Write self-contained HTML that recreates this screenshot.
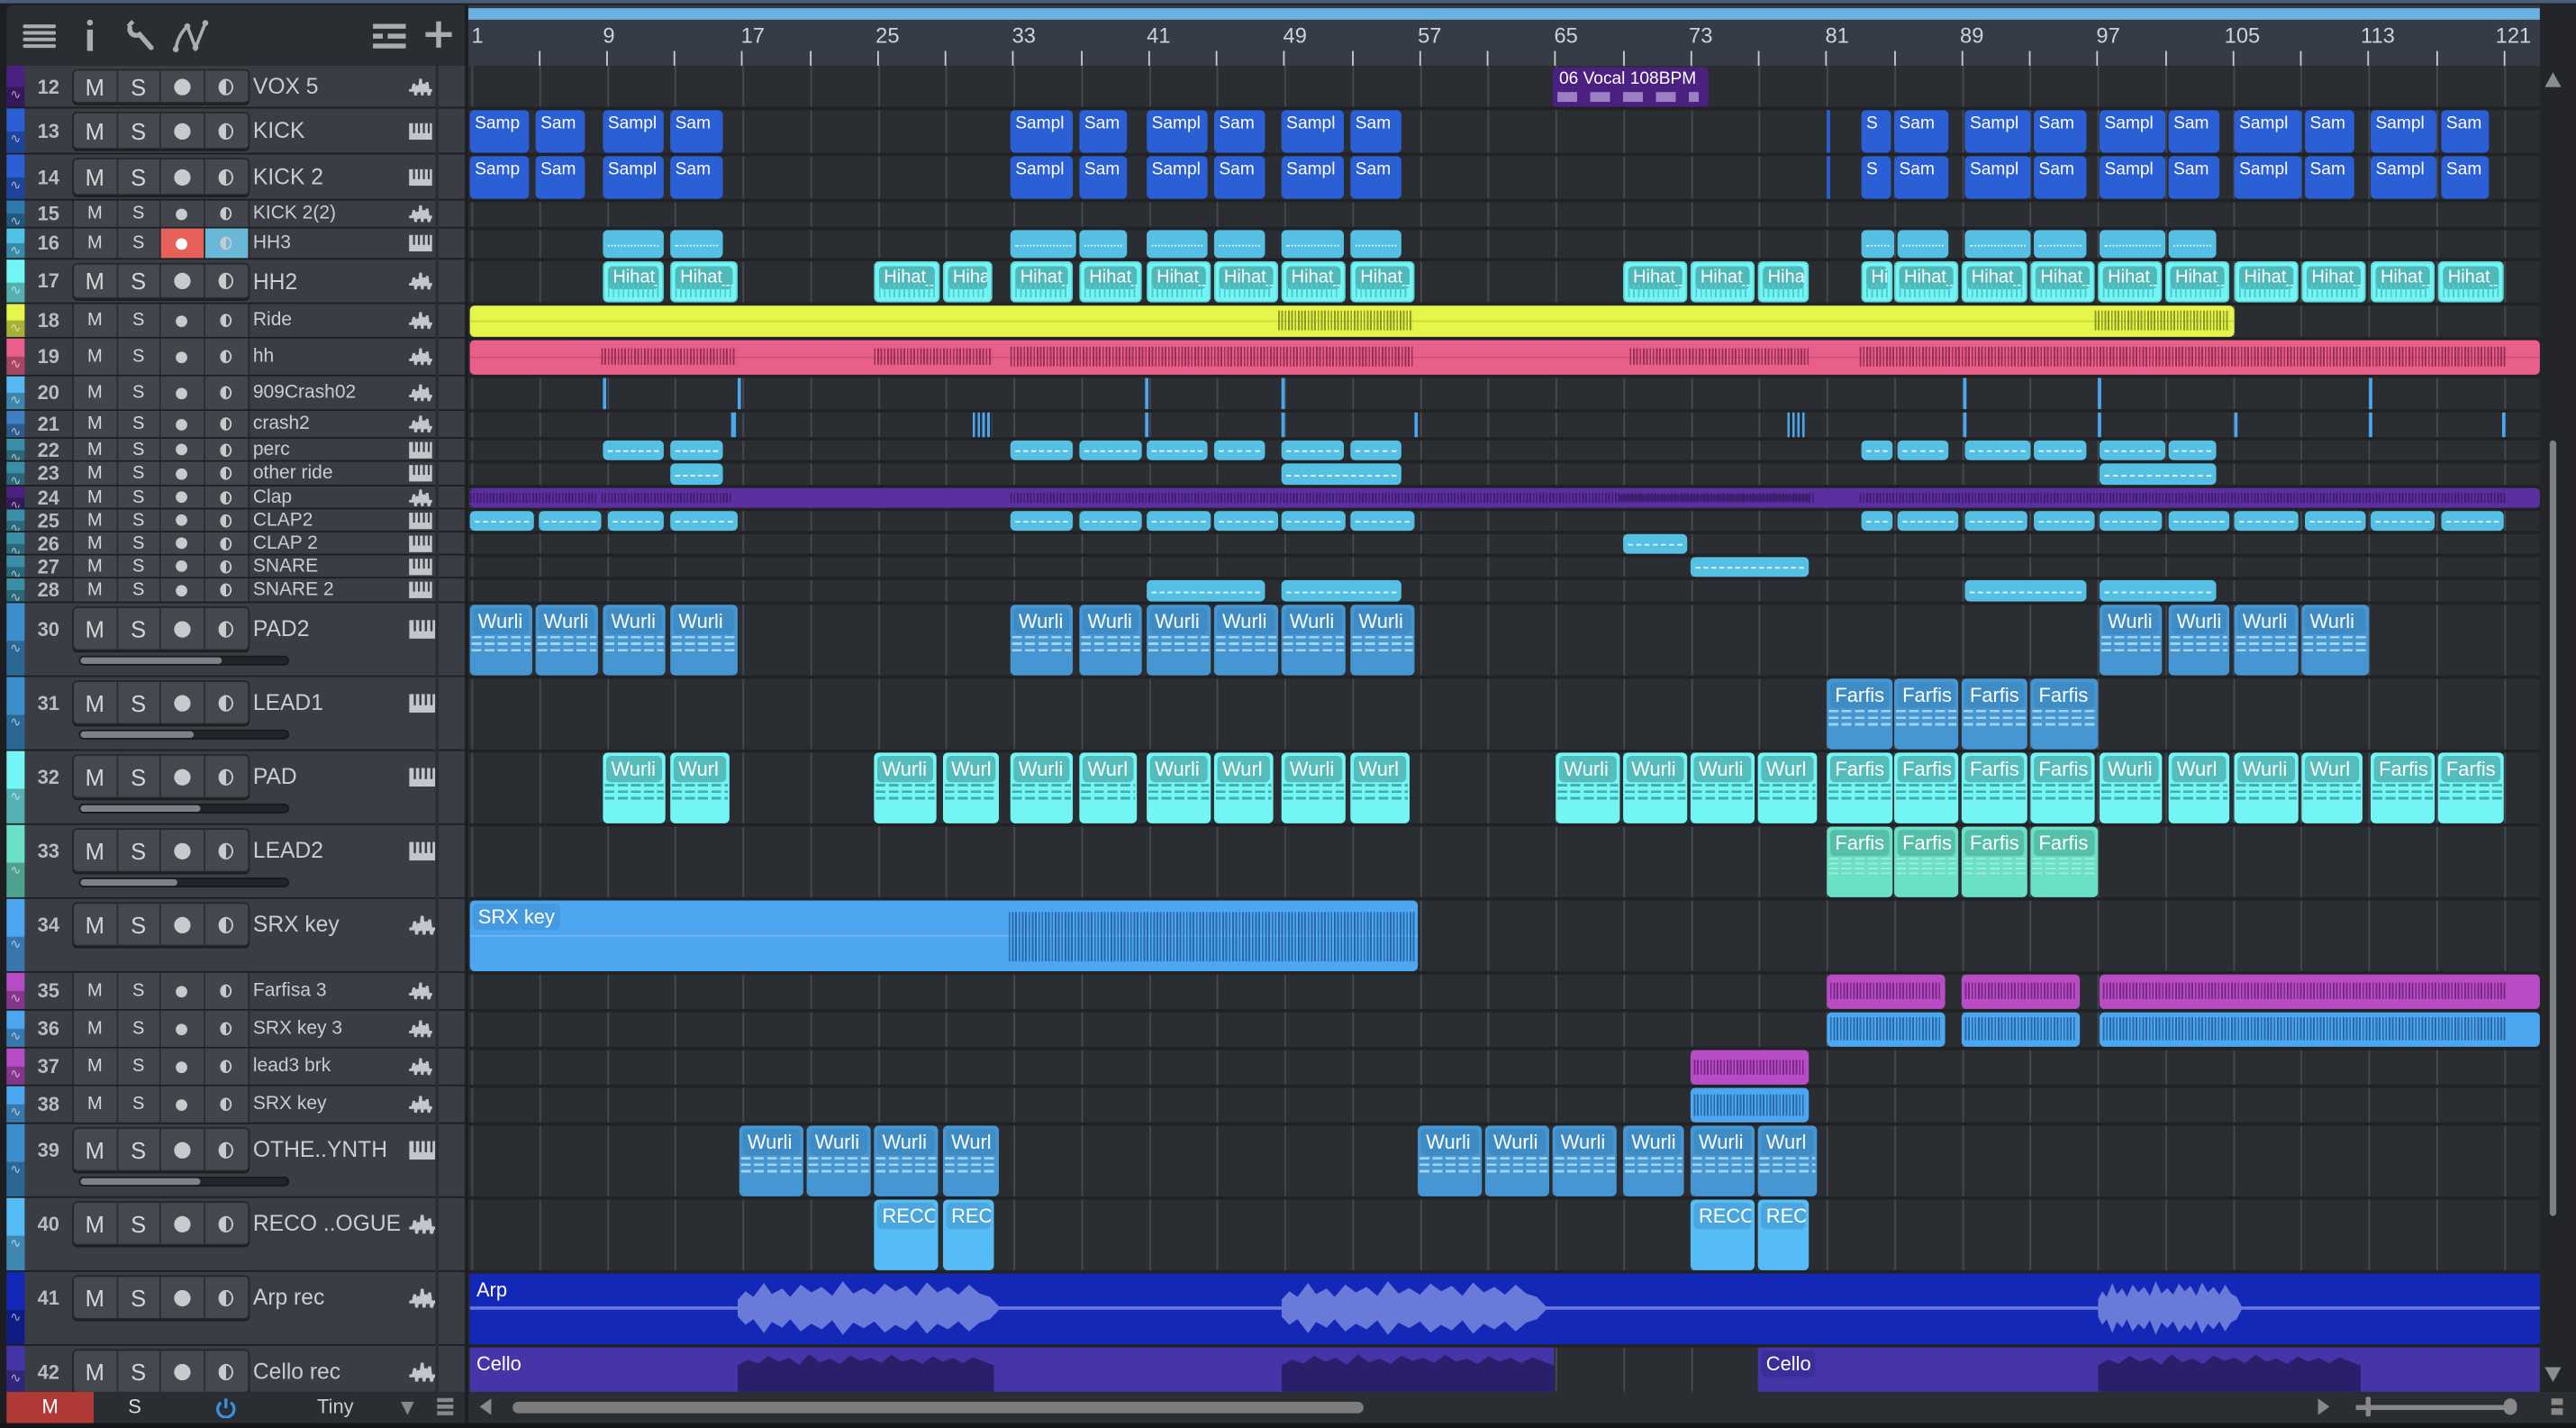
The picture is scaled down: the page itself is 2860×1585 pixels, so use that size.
<!DOCTYPE html>
<html><head><meta charset="utf-8"><style>
*{box-sizing:border-box}
body{margin:0;width:2860px;height:1584px;overflow:hidden;background:#1c1e21}
#s{position:absolute;left:0;top:0;width:1568px;height:869px;transform:scale(1.82398);transform-origin:0 0;font-family:"Liberation Sans",sans-serif;background:#1c1e21;overflow:hidden}
.abs{position:absolute}
#topl{position:absolute;left:4px;top:3px;width:279px;height:37px;background:#2a2d31;border-radius:4px 0 0 0}
#ru{position:absolute;left:285px;top:3px;width:1263px;height:37px;background:#363c47}
#ru .bl{position:absolute;left:0;top:2px;width:1262px;height:7px;background:#6ab0e0}
#ru .nm{position:absolute;top:11px;font-size:13px;color:#cfd2d6}
#ru .tk{position:absolute;top:28px;width:1px;height:9px;background:#c8cbd0}
#tl{position:absolute;left:285px;top:40px;width:1261px;height:807px;background-color:#2a2d31;background-image:repeating-linear-gradient(90deg,#464a50 0 1px,transparent 1px 41.24px);background-position:2px 0}
.sep{position:absolute;left:285px;width:1261px;height:2px;background:#202226}
.r{position:absolute;left:0;width:1546px}
.c{position:absolute;top:0;bottom:0;border-radius:3px;overflow:hidden;white-space:nowrap;color:#fff}
.k{background:#2a5fd6;font-size:10.5px;padding:2px 0 0 3px}
.h3{background:#56bfe4}
.h3:after{content:"";position:absolute;left:3px;right:3px;top:50%;border-top:1px dotted #e0f6ff}
.hh{background:#74f5f5;border:1px solid #5fd8d8}
.lb{display:block;margin:2px 2px 0 2px;border-radius:3px;padding:1px 3px;font-size:11px;overflow:hidden}
.hh .lb{background:#4fb8b8}
.hh:after{content:"";position:absolute;left:2px;right:2px;bottom:2px;height:8px;background:repeating-linear-gradient(90deg,#4fc9c9 0 1px,transparent 1px 3px)}
.w{background:#4596d2}
.w .lb{background:#3d8cc6;font-size:12px}
.w:after,.wc:after,.fm:after,.fb:after{content:"";position:absolute;left:1px;right:1px;top:19px;height:10px;background:repeating-linear-gradient(180deg,#b9e2f5 0 1.5px,transparent 1.5px 4px);opacity:.8;-webkit-mask:repeating-linear-gradient(90deg,#000 0 6px,transparent 6px 8px)}
.wc{background:#74f5f5}
.wc .lb{background:#55bcbc;font-size:12px}
.wc:after{background:repeating-linear-gradient(180deg,#3a9a9a 0 1.5px,transparent 1.5px 4px)}
.fb{background:#4596d2}.fb .lb{background:#3d8cc6;font-size:12px}
.fm{background:#6ae0c6}.fm .lb{background:#55bfaa;font-size:12px}
.fm:after{background:repeating-linear-gradient(180deg,#a8f0e0 0 1px,transparent 1px 3px)}
.sm{background:#56bfe4}
.sm:after{content:"";position:absolute;left:3px;right:3px;top:50%;border-top:1px dashed #dff4ff}
.wf{position:absolute;background:repeating-linear-gradient(90deg,var(--d) 0 1px,transparent 1px 2px)}
.hr{position:absolute;left:4px;width:279px;background:#3a3d43}
.st{position:absolute;left:0;top:0;width:11px;height:100%}
.st:after{content:"∿";position:absolute;left:0;bottom:0;width:11px;height:48%;background:rgba(0,0,0,.28);color:rgba(255,255,255,.6);font-size:8px;text-align:center;line-height:10px;overflow:hidden}
.ln{position:absolute;left:11px;top:0;height:100%;width:268px;display:flex;align-items:center}
.t .ln{height:31px}
.n{width:29px;text-align:center;font-weight:bold;font-size:12px;color:#b9bcc1}
.bx{display:flex;height:calc(100% - 4px);background:#45484e;border-radius:3px;border:1px solid #25272b;box-shadow:0 1px 0 #1c1d20}
.bx.f{height:100%;border-radius:0;border-width:0 1px;background:#42454b;box-shadow:none}
.b{width:26.5px;display:flex;align-items:center;justify-content:center;border-right:1px solid #2a2c30;color:#d4d6d9;font-size:14px}
.f .b{font-size:11px}
.b:last-child{border-right:0}
.dot{width:10px;height:10px;border-radius:50%;background:#c8cacd}
.f .dot{width:7px;height:7px}
.mo{width:9px;height:10px;border-radius:50%;border:1.5px solid #c8cacd;background:linear-gradient(90deg,#c8cacd 50%,transparent 50%)}
.f .mo{width:7px;height:8px}
.nme{margin-left:2px;width:94px;color:#c9ccd0;font-size:13.5px;white-space:nowrap;overflow:hidden}
.f~.nme{font-size:11.5px}
.ic{width:16px;height:12px}
.sl{position:absolute;left:44px;top:32px;width:128px;height:6px;background:#222429;border-radius:3px;border:1px solid #18191c}
.sl i{display:block;height:100%;background:#7d8288;border-radius:3px}
.aw{position:absolute;background:#6a7ad8;clip-path:polygon(0 35%,3% 20%,6% 30%,10% 5%,13% 25%,17% 15%,20% 30%,24% 8%,28% 22%,32% 12%,36% 28%,40% 2%,44% 24%,48% 14%,52% 26%,56% 6%,60% 20%,64% 10%,68% 28%,72% 4%,76% 22%,80% 12%,84% 26%,88% 8%,92% 24%,96% 30%,100% 50%,96% 70%,92% 76%,88% 92%,84% 74%,80% 88%,76% 78%,72% 96%,68% 72%,64% 90%,60% 80%,56% 94%,52% 74%,48% 86%,44% 76%,40% 98%,36% 72%,32% 88%,28% 78%,24% 92%,20% 70%,17% 85%,13% 75%,10% 95%,6% 70%,3% 80%,0 65%)}
.cw{position:absolute;background:#2a1f6a;clip-path:polygon(0 100%,0 30%,4% 15%,8% 25%,12% 5%,16% 20%,20% 10%,24% 28%,28% 0,32% 22%,36% 12%,40% 26%,44% 4%,48% 18%,52% 10%,56% 24%,60% 2%,64% 20%,68% 12%,72% 26%,76% 6%,80% 20%,84% 10%,88% 24%,92% 8%,96% 20%,100% 30%,100% 100%)}
</style></head><body><div id="s">
<svg width="0" height="0" style="position:absolute"><defs>
<symbol id="wv" viewBox="0 0 16 12"><path d="M1 8 L3 8 L4 4 L5 11 L6 5 L7 9 L8 1 L9 11 L10 4 L11 9 L12 3 L13 11 L14 8 L15 8" stroke="#c3c6ca" stroke-width="1.6" fill="none"/></symbol>
<symbol id="ky" viewBox="0 0 16 12"><rect x="1" y="1" width="14" height="10" fill="#c3c6ca"/><path d="M4 1V7M7 1V7M10 1V7M13 1V7" stroke="#3a3d43" stroke-width="1.2"/></symbol>
</defs></svg>

<div class="abs" style="left:0;top:0;width:1568px;height:2px;background:#4b5d78"></div>
<div id="topl">
<svg class="abs" style="left:10px;top:11px" width="20" height="16"><path d="M1 2H19M1 6H19M1 10H19M1 14H19" stroke="#a9acb0" stroke-width="2.2" stroke-linecap="round"/></svg>
<svg class="abs" style="left:47px;top:9px" width="8" height="20"><rect x="2" y="0" width="3.5" height="3.5" rx="1.5" fill="#a9acb0"/><rect x="2" y="6" width="3.5" height="13" fill="#a9acb0"/></svg>
<svg class="abs" style="left:72px;top:9px" width="20" height="20"><path d="M3 5 A4 4 0 0 0 9 9 L16 17" stroke="#a9acb0" stroke-width="3" fill="none" stroke-linecap="round"/><path d="M2 4 L5 1" stroke="#a9acb0" stroke-width="2.5"/></svg>
<svg class="abs" style="left:100px;top:9px" width="32" height="22"><path d="M3 18 Q4 10 10 4 M10 4 L15 17 L21 2" stroke="#a9acb0" stroke-width="2" fill="none"/><circle cx="3" cy="18" r="1.8" fill="#a9acb0"/><circle cx="10" cy="4" r="1.8" fill="#a9acb0"/><circle cx="15" cy="17" r="1.8" fill="#a9acb0"/><circle cx="21" cy="2" r="1.8" fill="#a9acb0"/></svg>
<svg class="abs" style="left:223px;top:11px" width="20" height="18"><path d="M0 2H20M0 8H6M9 8H20M0 14H20" stroke="#a9acb0" stroke-width="3"/></svg>
<svg class="abs" style="left:254px;top:9px" width="18" height="18"><path d="M9 1V17M1 9H17" stroke="#a9acb0" stroke-width="3"/></svg>
</div>

<div id="ru"><div class="bl"></div>
<span class="nm" style="left:2px">1</span><span class="nm" style="left:82px">9</span><span class="nm" style="left:166px">17</span><span class="nm" style="left:248px">25</span><span class="nm" style="left:331px">33</span><span class="nm" style="left:413px">41</span><span class="nm" style="left:496px">49</span><span class="nm" style="left:578px">57</span><span class="nm" style="left:661px">65</span><span class="nm" style="left:743px">73</span><span class="nm" style="left:826px">81</span><span class="nm" style="left:908px">89</span><span class="nm" style="left:991px">97</span><span class="nm" style="left:1069px">105</span><span class="nm" style="left:1152px">113</span><span class="nm" style="left:1234px">121</span>
<i class="tk" style="left:43px"></i><i class="tk" style="left:84px"></i><i class="tk" style="left:125px"></i><i class="tk" style="left:166px"></i><i class="tk" style="left:208px"></i><i class="tk" style="left:249px"></i><i class="tk" style="left:290px"></i><i class="tk" style="left:331px"></i><i class="tk" style="left:373px"></i><i class="tk" style="left:414px"></i><i class="tk" style="left:455px"></i><i class="tk" style="left:496px"></i><i class="tk" style="left:538px"></i><i class="tk" style="left:579px"></i><i class="tk" style="left:620px"></i><i class="tk" style="left:661px"></i><i class="tk" style="left:703px"></i><i class="tk" style="left:744px"></i><i class="tk" style="left:785px"></i><i class="tk" style="left:826px"></i><i class="tk" style="left:868px"></i><i class="tk" style="left:909px"></i><i class="tk" style="left:950px"></i><i class="tk" style="left:991px"></i><i class="tk" style="left:1033px"></i><i class="tk" style="left:1074px"></i><i class="tk" style="left:1115px"></i><i class="tk" style="left:1156px"></i><i class="tk" style="left:1198px"></i><i class="tk" style="left:1239px"></i>
</div>
<div class="abs" style="left:283px;top:3px;width:2px;height:866px;background:#1c1e21"></div>
<div class="abs" style="left:1546px;top:3px;width:22px;height:844px;background:#232528"></div>
<div class="abs" style="left:1549px;top:44px;width:0;height:0;border-left:5px solid transparent;border-right:5px solid transparent;border-bottom:9px solid #8a8d91"></div>
<div class="abs" style="left:1552px;top:268px;width:4px;height:472px;background:#7d8084;border-radius:2px"></div>
<div class="abs" style="left:1549px;top:832px;width:0;height:0;border-left:5px solid transparent;border-right:5px solid transparent;border-top:9px solid #8a8d91"></div>

<div id="tl"></div>
<div class="sep" style="top:65px"></div><div class="sep" style="top:93px"></div><div class="sep" style="top:121px"></div><div class="sep" style="top:138px"></div><div class="sep" style="top:157px"></div><div class="sep" style="top:184px"></div><div class="sep" style="top:205px"></div><div class="sep" style="top:228px"></div><div class="sep" style="top:249px"></div><div class="sep" style="top:266px"></div><div class="sep" style="top:280px"></div><div class="sep" style="top:295px"></div><div class="sep" style="top:309px"></div><div class="sep" style="top:323px"></div><div class="sep" style="top:337px"></div><div class="sep" style="top:351px"></div><div class="sep" style="top:366px"></div><div class="sep" style="top:411px"></div><div class="sep" style="top:456px"></div><div class="sep" style="top:501px"></div><div class="sep" style="top:546px"></div><div class="sep" style="top:591px"></div><div class="sep" style="top:614px"></div><div class="sep" style="top:637px"></div><div class="sep" style="top:660px"></div><div class="sep" style="top:683px"></div><div class="sep" style="top:728px"></div><div class="sep" style="top:773px"></div><div class="sep" style="top:818px"></div>

<div class="r" style="top:41px;height:24px"><div class="c" style="left:945px;width:95px;background:#4a2080;font-size:10.5px;padding:1px 4px">06 Vocal 108BPM<div class="abs" style="left:3px;bottom:3px;width:86px;height:6px;background:repeating-linear-gradient(90deg,#9a80c0 0 12px,transparent 12px 20px)"></div></div></div>

<div class="r" style="top:67px;height:26px">
<div class="c k" style="left:286px;width:36px">Samp</div><div class="c k" style="left:326px;width:30px">Sam</div><div class="c k" style="left:367px;width:37px">Sampl</div><div class="c k" style="left:408px;width:32px">Sam</div><div class="c k" style="left:615px;width:38px">Sampl</div><div class="c k" style="left:657px;width:29px">Sam</div><div class="c k" style="left:698px;width:37px">Sampl</div><div class="c k" style="left:739px;width:31px">Sam</div><div class="c k" style="left:780px;width:38px">Sampl</div><div class="c k" style="left:822px;width:31px">Sam</div><div class="abs" style="left:1112px;top:0;width:2px;height:26px;background:#2a5fd6"></div><div class="c k" style="left:1133px;width:18px">S</div><div class="c k" style="left:1153px;width:33px">Sam</div><div class="c k" style="left:1196px;width:40px">Sampl</div><div class="c k" style="left:1238px;width:32px">Sam</div><div class="c k" style="left:1278px;width:40px">Sampl</div><div class="c k" style="left:1320px;width:31px">Sam</div><div class="c k" style="left:1360px;width:41px">Sampl</div><div class="c k" style="left:1403px;width:30px">Sam</div><div class="c k" style="left:1443px;width:40px">Sampl</div><div class="c k" style="left:1486px;width:29px">Sam</div></div>
<div class="r" style="top:95px;height:26px">
<div class="c k" style="left:286px;width:36px">Samp</div><div class="c k" style="left:326px;width:30px">Sam</div><div class="c k" style="left:367px;width:37px">Sampl</div><div class="c k" style="left:408px;width:32px">Sam</div><div class="c k" style="left:615px;width:38px">Sampl</div><div class="c k" style="left:657px;width:29px">Sam</div><div class="c k" style="left:698px;width:37px">Sampl</div><div class="c k" style="left:739px;width:31px">Sam</div><div class="c k" style="left:780px;width:38px">Sampl</div><div class="c k" style="left:822px;width:31px">Sam</div><div class="abs" style="left:1112px;top:0;width:2px;height:26px;background:#2a5fd6"></div><div class="c k" style="left:1133px;width:18px">S</div><div class="c k" style="left:1153px;width:33px">Sam</div><div class="c k" style="left:1196px;width:40px">Sampl</div><div class="c k" style="left:1238px;width:32px">Sam</div><div class="c k" style="left:1278px;width:40px">Sampl</div><div class="c k" style="left:1320px;width:31px">Sam</div><div class="c k" style="left:1360px;width:41px">Sampl</div><div class="c k" style="left:1403px;width:30px">Sam</div><div class="c k" style="left:1443px;width:40px">Sampl</div><div class="c k" style="left:1486px;width:29px">Sam</div></div>

<div class="r" style="top:140px;height:17px">
<div class="c h3" style="left:367px;width:37px"></div><div class="c h3" style="left:408px;width:32px"></div><div class="c h3" style="left:615px;width:40px"></div><div class="c h3" style="left:657px;width:29px"></div><div class="c h3" style="left:698px;width:37px"></div><div class="c h3" style="left:739px;width:31px"></div><div class="c h3" style="left:780px;width:38px"></div><div class="c h3" style="left:822px;width:31px"></div><div class="c h3" style="left:1133px;width:20px"></div><div class="c h3" style="left:1155px;width:31px"></div><div class="c h3" style="left:1196px;width:40px"></div><div class="c h3" style="left:1238px;width:32px"></div><div class="c h3" style="left:1278px;width:40px"></div><div class="c h3" style="left:1320px;width:29px"></div></div>

<div class="r" style="top:159px;height:25px">
<div class="c hh" style="left:367px;width:37px"><span class="lb">Hihat_</span></div><div class="c hh" style="left:408px;width:41px"><span class="lb">Hihat_l</span></div><div class="c hh" style="left:532px;width:40px"><span class="lb">Hihat_</span></div><div class="c hh" style="left:574px;width:30px"><span class="lb">Hiha</span></div><div class="c hh" style="left:615px;width:38px"><span class="lb">Hihat_</span></div><div class="c hh" style="left:657px;width:38px"><span class="lb">Hihat_</span></div><div class="c hh" style="left:698px;width:39px"><span class="lb">Hihat_</span></div><div class="c hh" style="left:739px;width:39px"><span class="lb">Hihat_</span></div><div class="c hh" style="left:780px;width:39px"><span class="lb">Hihat_</span></div><div class="c hh" style="left:822px;width:39px"><span class="lb">Hihat_</span></div><div class="c hh" style="left:988px;width:39px"><span class="lb">Hihat_</span></div><div class="c hh" style="left:1029px;width:39px"><span class="lb">Hihat_</span></div><div class="c hh" style="left:1070px;width:31px"><span class="lb">Hiha</span></div><div class="c hh" style="left:1133px;width:19px"><span class="lb">Hi</span></div><div class="c hh" style="left:1153px;width:39px"><span class="lb">Hihat_</span></div><div class="c hh" style="left:1194px;width:40px"><span class="lb">Hihat_</span></div><div class="c hh" style="left:1236px;width:39px"><span class="lb">Hihat_</span></div><div class="c hh" style="left:1277px;width:39px"><span class="lb">Hihat_</span></div><div class="c hh" style="left:1318px;width:39px"><span class="lb">Hihat_</span></div><div class="c hh" style="left:1360px;width:39px"><span class="lb">Hihat_</span></div><div class="c hh" style="left:1401px;width:39px"><span class="lb">Hihat_</span></div><div class="c hh" style="left:1443px;width:39px"><span class="lb">Hihat_</span></div><div class="c hh" style="left:1484px;width:40px"><span class="lb">Hihat_</span></div></div>

<div class="r" style="top:186px;height:19px"><div class="c" style="left:286px;width:1074px;background:#e6f54a"><div class="abs" style="left:0;right:0;top:9px;height:1px;background:#cbd83e"></div><div class="wf" style="--d:#8e9a28;left:492px;width:82px;top:3px;height:12px"></div><div class="wf" style="--d:#8e9a28;left:989px;width:82px;top:3px;height:12px"></div></div></div>
<div class="r" style="top:207px;height:21px"><div class="c" style="left:286px;width:1260px;background:#e8608a"><div class="abs" style="left:0;right:0;top:10px;height:1px;background:#d0507a"></div><div class="wf" style="--d:#9a3058;left:80px;width:82px;top:5px;height:10px"></div><div class="wf" style="--d:#9a3058;left:246px;width:72px;top:5px;height:10px"></div><div class="wf" style="--d:#9a3058;left:329px;width:246px;top:4px;height:12px"></div><div class="wf" style="--d:#9a3058;left:706px;width:110px;top:5px;height:10px"></div><div class="wf" style="--d:#9a3058;left:846px;width:393px;top:4px;height:12px"></div></div></div>

<div class="r" style="top:230px;height:19px"><i class="abs" style="left:367px;top:0;width:2px;height:19px;background:#4aa8f0"></i><i class="abs" style="left:449px;top:0;width:2px;height:19px;background:#4aa8f0"></i><i class="abs" style="left:697px;top:0;width:2px;height:19px;background:#4aa8f0"></i><i class="abs" style="left:780px;top:0;width:2px;height:19px;background:#4aa8f0"></i><i class="abs" style="left:1195px;top:0;width:2px;height:19px;background:#4aa8f0"></i><i class="abs" style="left:1277px;top:0;width:2px;height:19px;background:#4aa8f0"></i><i class="abs" style="left:1442px;top:0;width:2px;height:19px;background:#4aa8f0"></i></div>
<div class="r" style="top:251px;height:15px"><i class="abs" style="left:445px;top:0;width:3px;height:15px;background:#4aa8f0"></i><i class="abs" style="left:592px;top:0;width:12px;height:15px;background:repeating-linear-gradient(90deg,#4aa8f0 0 1.5px,transparent 1.5px 3px)"></i><i class="abs" style="left:697px;top:0;width:2px;height:15px;background:#4aa8f0"></i><i class="abs" style="left:780px;top:0;width:2px;height:15px;background:#4aa8f0"></i><i class="abs" style="left:861px;top:0;width:2px;height:15px;background:#4aa8f0"></i><i class="abs" style="left:1088px;top:0;width:12px;height:15px;background:repeating-linear-gradient(90deg,#4aa8f0 0 1.5px,transparent 1.5px 3px)"></i><i class="abs" style="left:1195px;top:0;width:2px;height:15px;background:#4aa8f0"></i><i class="abs" style="left:1277px;top:0;width:2px;height:15px;background:#4aa8f0"></i><i class="abs" style="left:1360px;top:0;width:2px;height:15px;background:#4aa8f0"></i><i class="abs" style="left:1442px;top:0;width:2px;height:15px;background:#4aa8f0"></i><i class="abs" style="left:1523px;top:0;width:2px;height:15px;background:#4aa8f0"></i></div>

<div class="r" style="top:268px;height:12px">
<div class="c sm" style="left:367px;width:37px"></div><div class="c sm" style="left:408px;width:32px"></div><div class="c sm" style="left:615px;width:38px"></div><div class="c sm" style="left:657px;width:38px"></div><div class="c sm" style="left:698px;width:37px"></div><div class="c sm" style="left:739px;width:31px"></div><div class="c sm" style="left:780px;width:38px"></div><div class="c sm" style="left:822px;width:31px"></div><div class="c sm" style="left:1133px;width:19px"></div><div class="c sm" style="left:1155px;width:31px"></div><div class="c sm" style="left:1196px;width:40px"></div><div class="c sm" style="left:1238px;width:32px"></div><div class="c sm" style="left:1278px;width:40px"></div><div class="c sm" style="left:1320px;width:29px"></div></div>
<div class="r" style="top:282px;height:13px"><div class="c sm" style="left:408px;width:32px"></div><div class="c sm" style="left:780px;width:73px"></div><div class="c sm" style="left:1278px;width:71px"></div></div>
<div class="r" style="top:297px;height:12px"><div class="c" style="left:286px;width:1260px;background:#5c2fa0"><div class="wf" style="--d:#3e1e70;left:0;width:78px;top:3px;height:6px"></div><div class="wf" style="--d:#3e1e70;left:80px;width:80px;top:3px;height:6px"></div><div class="wf" style="--d:#3e1e70;left:329px;width:490px;top:3px;height:6px"></div><div class="wf" style="--d:#3e1e70;left:700px;width:115px;top:4px;height:4px"></div><div class="wf" style="--d:#3e1e70;left:846px;width:393px;top:3px;height:6px"></div></div></div>
<div class="r" style="top:311px;height:12px">
<div class="c sm" style="left:286px;width:39px"></div><div class="c sm" style="left:328px;width:38px"></div><div class="c sm" style="left:370px;width:34px"></div><div class="c sm" style="left:408px;width:41px"></div><div class="c sm" style="left:615px;width:38px"></div><div class="c sm" style="left:657px;width:38px"></div><div class="c sm" style="left:698px;width:39px"></div><div class="c sm" style="left:739px;width:39px"></div><div class="c sm" style="left:780px;width:39px"></div><div class="c sm" style="left:822px;width:39px"></div><div class="c sm" style="left:1133px;width:19px"></div><div class="c sm" style="left:1155px;width:37px"></div><div class="c sm" style="left:1196px;width:38px"></div><div class="c sm" style="left:1238px;width:37px"></div><div class="c sm" style="left:1278px;width:38px"></div><div class="c sm" style="left:1320px;width:37px"></div><div class="c sm" style="left:1360px;width:39px"></div><div class="c sm" style="left:1403px;width:37px"></div><div class="c sm" style="left:1443px;width:39px"></div><div class="c sm" style="left:1486px;width:38px"></div></div>
<div class="r" style="top:325px;height:12px"><div class="c sm" style="left:988px;width:39px"></div></div>
<div class="r" style="top:339px;height:12px"><div class="c sm" style="left:1029px;width:72px"></div></div>
<div class="r" style="top:353px;height:13px"><div class="c sm" style="left:698px;width:72px"></div><div class="c sm" style="left:780px;width:73px"></div><div class="c sm" style="left:1196px;width:74px"></div><div class="c sm" style="left:1278px;width:71px"></div></div>

<div class="r" style="top:368px;height:43px">
<div class="c w" style="left:286px;width:38px"><span class="lb">Wurli</span></div><div class="c w" style="left:326px;width:38px"><span class="lb">Wurli</span></div><div class="c w" style="left:367px;width:38px"><span class="lb">Wurli</span></div><div class="c w" style="left:408px;width:41px"><span class="lb">Wurli</span></div><div class="c w" style="left:615px;width:38px"><span class="lb">Wurli</span></div><div class="c w" style="left:657px;width:38px"><span class="lb">Wurli</span></div><div class="c w" style="left:698px;width:39px"><span class="lb">Wurli</span></div><div class="c w" style="left:739px;width:39px"><span class="lb">Wurli</span></div><div class="c w" style="left:780px;width:39px"><span class="lb">Wurli</span></div><div class="c w" style="left:822px;width:39px"><span class="lb">Wurli</span></div><div class="c w" style="left:1278px;width:38px"><span class="lb">Wurli</span></div><div class="c w" style="left:1320px;width:37px"><span class="lb">Wurli</span></div><div class="c w" style="left:1360px;width:39px"><span class="lb">Wurli</span></div><div class="c w" style="left:1401px;width:41px"><span class="lb">Wurli</span></div></div>
<div class="r" style="top:413px;height:43px"><div class="c fb" style="left:1112px;width:40px"><span class="lb">Farfis</span></div><div class="c fb" style="left:1153px;width:39px"><span class="lb">Farfis</span></div><div class="c fb" style="left:1194px;width:40px"><span class="lb">Farfis</span></div><div class="c fb" style="left:1236px;width:41px"><span class="lb">Farfis</span></div></div>
<div class="r" style="top:458px;height:43px">
<div class="c wc" style="left:367px;width:38px"><span class="lb">Wurli</span></div><div class="c wc" style="left:408px;width:36px"><span class="lb">Wurl</span></div><div class="c wc" style="left:532px;width:38px"><span class="lb">Wurli</span></div><div class="c wc" style="left:574px;width:34px"><span class="lb">Wurl</span></div><div class="c wc" style="left:615px;width:38px"><span class="lb">Wurli</span></div><div class="c wc" style="left:657px;width:35px"><span class="lb">Wurl</span></div><div class="c wc" style="left:698px;width:39px"><span class="lb">Wurli</span></div><div class="c wc" style="left:739px;width:36px"><span class="lb">Wurl</span></div><div class="c wc" style="left:780px;width:39px"><span class="lb">Wurli</span></div><div class="c wc" style="left:822px;width:36px"><span class="lb">Wurl</span></div><div class="c wc" style="left:947px;width:39px"><span class="lb">Wurli</span></div><div class="c wc" style="left:988px;width:39px"><span class="lb">Wurli</span></div><div class="c wc" style="left:1029px;width:39px"><span class="lb">Wurli</span></div><div class="c wc" style="left:1070px;width:36px"><span class="lb">Wurl</span></div><div class="c wc" style="left:1112px;width:40px"><span class="lb">Farfis</span></div><div class="c wc" style="left:1153px;width:39px"><span class="lb">Farfis</span></div><div class="c wc" style="left:1194px;width:40px"><span class="lb">Farfis</span></div><div class="c wc" style="left:1236px;width:39px"><span class="lb">Farfis</span></div><div class="c wc" style="left:1278px;width:38px"><span class="lb">Wurli</span></div><div class="c wc" style="left:1320px;width:37px"><span class="lb">Wurl</span></div><div class="c wc" style="left:1360px;width:39px"><span class="lb">Wurli</span></div><div class="c wc" style="left:1401px;width:37px"><span class="lb">Wurl</span></div><div class="c wc" style="left:1443px;width:39px"><span class="lb">Farfis</span></div><div class="c wc" style="left:1484px;width:40px"><span class="lb">Farfis</span></div></div>
<div class="r" style="top:503px;height:43px"><div class="c fm" style="left:1112px;width:40px"><span class="lb">Farfis</span></div><div class="c fm" style="left:1153px;width:39px"><span class="lb">Farfis</span></div><div class="c fm" style="left:1194px;width:40px"><span class="lb">Farfis</span></div><div class="c fm" style="left:1236px;width:41px"><span class="lb">Farfis</span></div></div>
<div class="r" style="top:548px;height:43px"><div class="c" style="left:286px;width:577px;background:#4da6f0"><span class="lb" style="display:inline-block;background:#4499e0;font-size:12px">SRX key</span><div class="abs" style="left:0;right:0;top:21px;height:1px;background:#6fb8f5"></div><div class="wf" style="--d:#2a6aa8;left:328px;width:248px;top:7px;height:30px"></div></div></div>
<div class="r" style="top:593px;height:21px"><div class="c" style="left:1112px;width:72px;background:#b84cc4"><div class="wf" style="--d:#7a2888;left:2px;right:2px;top:5px;height:10px"></div></div><div class="c" style="left:1194px;width:72px;background:#b84cc4"><div class="wf" style="--d:#7a2888;left:2px;right:2px;top:5px;height:10px"></div></div><div class="c" style="left:1278px;width:268px;background:#b84cc4"><div class="wf" style="--d:#7a2888;left:2px;width:245px;top:5px;height:10px"></div></div></div>
<div class="r" style="top:616px;height:21px"><div class="c" style="left:1112px;width:72px;background:#4da6f0"><div class="wf" style="--d:#2a6aa8;left:2px;right:2px;top:3px;height:14px"></div></div><div class="c" style="left:1194px;width:72px;background:#4da6f0"><div class="wf" style="--d:#2a6aa8;left:2px;right:2px;top:3px;height:14px"></div></div><div class="c" style="left:1278px;width:268px;background:#4da6f0"><div class="wf" style="--d:#2a6aa8;left:2px;width:245px;top:3px;height:14px"></div></div></div>
<div class="r" style="top:639px;height:21px"><div class="c" style="left:1029px;width:72px;background:#b84cc4"><div class="wf" style="--d:#7a2888;left:2px;right:2px;top:6px;height:9px"></div></div></div>
<div class="r" style="top:662px;height:21px"><div class="c" style="left:1029px;width:72px;background:#4da6f0"><div class="wf" style="--d:#2a6aa8;left:2px;right:2px;top:4px;height:13px"></div></div></div>
<div class="r" style="top:685px;height:43px">
<div class="c w" style="left:450px;width:39px"><span class="lb">Wurli</span></div><div class="c w" style="left:491px;width:39px"><span class="lb">Wurli</span></div><div class="c w" style="left:532px;width:39px"><span class="lb">Wurli</span></div><div class="c w" style="left:574px;width:34px"><span class="lb">Wurl</span></div><div class="c w" style="left:863px;width:39px"><span class="lb">Wurli</span></div><div class="c w" style="left:904px;width:39px"><span class="lb">Wurli</span></div><div class="c w" style="left:945px;width:39px"><span class="lb">Wurli</span></div><div class="c w" style="left:988px;width:37px"><span class="lb">Wurli</span></div><div class="c w" style="left:1029px;width:39px"><span class="lb">Wurli</span></div><div class="c w" style="left:1070px;width:36px"><span class="lb">Wurl</span></div></div>
<div class="r" style="top:730px;height:43px"><div class="c" style="left:532px;width:39px;background:#55bcf5"><span class="lb" style="background:#4aa6dc;font-size:12px">RECO</span></div><div class="c" style="left:574px;width:31px;background:#55bcf5"><span class="lb" style="background:#4aa6dc;font-size:12px">REC</span></div><div class="c" style="left:1029px;width:39px;background:#55bcf5"><span class="lb" style="background:#4aa6dc;font-size:12px">RECO</span></div><div class="c" style="left:1070px;width:31px;background:#55bcf5"><span class="lb" style="background:#4aa6dc;font-size:12px">REC</span></div></div>
<div class="r" style="top:775px;height:43px"><div class="c" style="left:286px;width:1260px;background:#1428b8;border-radius:0"><span class="abs" style="left:4px;top:3px;font-size:12px">Arp</span><div class="abs" style="left:0;right:0;top:20px;height:1.5px;background:#6a7ad8"></div><div class="aw" style="left:163px;width:160px;top:4px;height:34px"></div><div class="aw" style="left:494px;width:162px;top:4px;height:34px"></div><div class="aw" style="left:991px;width:88px;top:4px;height:34px"></div></div></div>
<div class="r" style="top:820px;height:27px"><div class="c" style="left:286px;width:660px;background:#4535a8;border-radius:0"><span class="abs" style="left:4px;top:3px;font-size:12px">Cello</span><div class="cw" style="left:163px;width:156px;top:4px;height:23px"></div><div class="cw" style="left:494px;width:166px;top:4px;height:23px"></div></div><div class="c" style="left:1070px;width:476px;background:#4535a8;border-radius:0"><span class="abs" style="left:2px;top:2px;font-size:12px;background:#3b2d9a;padding:1px 3px;border-radius:3px">Cello</span><div class="cw" style="left:207px;width:160px;top:4px;height:23px"></div></div></div>

<div class="hr" style="top:40px;height:25px"><div class="st" style="background:#4a2080"></div><div class="ln"><span class="n">12</span><div class="bx"><span class="b">M</span><span class="b">S</span><span class="b"><i class="dot"></i></span><span class="b"><i class="mo"></i></span></div><span class="nme">VOX 5</span><svg class="ic"><use href="#wv"/></svg></div></div>
<div class="hr" style="top:66px;height:27px"><div class="st" style="background:#2a5fd6"></div><div class="ln"><span class="n">13</span><div class="bx"><span class="b">M</span><span class="b">S</span><span class="b"><i class="dot"></i></span><span class="b"><i class="mo"></i></span></div><span class="nme">KICK</span><svg class="ic"><use href="#ky"/></svg></div></div>
<div class="hr" style="top:94px;height:27px"><div class="st" style="background:#2a5fd6"></div><div class="ln"><span class="n">14</span><div class="bx"><span class="b">M</span><span class="b">S</span><span class="b"><i class="dot"></i></span><span class="b"><i class="mo"></i></span></div><span class="nme">KICK 2</span><svg class="ic"><use href="#ky"/></svg></div></div>
<div class="hr" style="top:122px;height:16px"><div class="st" style="background:#2e7ab0"></div><div class="ln"><span class="n">15</span><div class="bx f"><span class="b">M</span><span class="b">S</span><span class="b"><i class="dot"></i></span><span class="b"><i class="mo"></i></span></div><span class="nme">KICK 2(2)</span><svg class="ic"><use href="#wv"/></svg></div></div>
<div class="hr" style="top:139px;height:18px"><div class="st" style="background:#4fc0e6"></div><div class="ln"><span class="n">16</span><div class="bx f"><span class="b">M</span><span class="b">S</span><span class="b" style="background:#e8605a"><i class="dot" style="background:#fff"></i></span><span class="b" style="background:#6ab8d8"><i class="mo"></i></span></div><span class="nme">HH3</span><svg class="ic"><use href="#ky"/></svg></div></div>
<div class="hr" style="top:158px;height:26px"><div class="st" style="background:#74f5f5"></div><div class="ln"><span class="n">17</span><div class="bx"><span class="b">M</span><span class="b">S</span><span class="b"><i class="dot"></i></span><span class="b"><i class="mo"></i></span></div><span class="nme">HH2</span><svg class="ic"><use href="#wv"/></svg></div></div>
<div class="hr" style="top:185px;height:20px"><div class="st" style="background:#e6f54a"></div><div class="ln"><span class="n">18</span><div class="bx f"><span class="b">M</span><span class="b">S</span><span class="b"><i class="dot"></i></span><span class="b"><i class="mo"></i></span></div><span class="nme">Ride</span><svg class="ic"><use href="#wv"/></svg></div></div>
<div class="hr" style="top:206px;height:22px"><div class="st" style="background:#e8608a"></div><div class="ln"><span class="n">19</span><div class="bx f"><span class="b">M</span><span class="b">S</span><span class="b"><i class="dot"></i></span><span class="b"><i class="mo"></i></span></div><span class="nme">hh</span><svg class="ic"><use href="#wv"/></svg></div></div>
<div class="hr" style="top:229px;height:20px"><div class="st" style="background:#56b8f0"></div><div class="ln"><span class="n">20</span><div class="bx f"><span class="b">M</span><span class="b">S</span><span class="b"><i class="dot"></i></span><span class="b"><i class="mo"></i></span></div><span class="nme">909Crash02</span><svg class="ic"><use href="#wv"/></svg></div></div>
<div class="hr" style="top:250px;height:16px"><div class="st" style="background:#3e7ec2"></div><div class="ln"><span class="n">21</span><div class="bx f"><span class="b">M</span><span class="b">S</span><span class="b"><i class="dot"></i></span><span class="b"><i class="mo"></i></span></div><span class="nme">crash2</span><svg class="ic"><use href="#wv"/></svg></div></div>
<div class="hr" style="top:267px;height:13px"><div class="st" style="background:#3a8fa8"></div><div class="ln"><span class="n">22</span><div class="bx f"><span class="b">M</span><span class="b">S</span><span class="b"><i class="dot"></i></span><span class="b"><i class="mo"></i></span></div><span class="nme">perc</span><svg class="ic"><use href="#ky"/></svg></div></div>
<div class="hr" style="top:281px;height:14px"><div class="st" style="background:#3a8fa8"></div><div class="ln"><span class="n">23</span><div class="bx f"><span class="b">M</span><span class="b">S</span><span class="b"><i class="dot"></i></span><span class="b"><i class="mo"></i></span></div><span class="nme">other ride</span><svg class="ic"><use href="#ky"/></svg></div></div>
<div class="hr" style="top:296px;height:13px"><div class="st" style="background:#4a2080"></div><div class="ln"><span class="n">24</span><div class="bx f"><span class="b">M</span><span class="b">S</span><span class="b"><i class="dot"></i></span><span class="b"><i class="mo"></i></span></div><span class="nme">Clap</span><svg class="ic"><use href="#wv"/></svg></div></div>
<div class="hr" style="top:310px;height:13px"><div class="st" style="background:#3a8fa8"></div><div class="ln"><span class="n">25</span><div class="bx f"><span class="b">M</span><span class="b">S</span><span class="b"><i class="dot"></i></span><span class="b"><i class="mo"></i></span></div><span class="nme">CLAP2</span><svg class="ic"><use href="#ky"/></svg></div></div>
<div class="hr" style="top:324px;height:13px"><div class="st" style="background:#3a8fa8"></div><div class="ln"><span class="n">26</span><div class="bx f"><span class="b">M</span><span class="b">S</span><span class="b"><i class="dot"></i></span><span class="b"><i class="mo"></i></span></div><span class="nme">CLAP 2</span><svg class="ic"><use href="#ky"/></svg></div></div>
<div class="hr" style="top:338px;height:13px"><div class="st" style="background:#3a8fa8"></div><div class="ln"><span class="n">27</span><div class="bx f"><span class="b">M</span><span class="b">S</span><span class="b"><i class="dot"></i></span><span class="b"><i class="mo"></i></span></div><span class="nme">SNARE</span><svg class="ic"><use href="#ky"/></svg></div></div>
<div class="hr" style="top:352px;height:14px"><div class="st" style="background:#3a8fa8"></div><div class="ln"><span class="n">28</span><div class="bx f"><span class="b">M</span><span class="b">S</span><span class="b"><i class="dot"></i></span><span class="b"><i class="mo"></i></span></div><span class="nme">SNARE 2</span><svg class="ic"><use href="#ky"/></svg></div></div>
<div class="hr t" style="top:367px;height:44px"><div class="st" style="background:#3c8fcc"></div><div class="ln"><span class="n">30</span><div class="bx"><span class="b">M</span><span class="b">S</span><span class="b"><i class="dot"></i></span><span class="b"><i class="mo"></i></span></div><span class="nme">PAD2</span><svg class="ic" style="width:18px;height:14px"><use href="#ky"/></svg></div><div class="sl"><i style="width:68%"></i></div></div>
<div class="hr t" style="top:412px;height:44px"><div class="st" style="background:#3c8fcc"></div><div class="ln"><span class="n">31</span><div class="bx"><span class="b">M</span><span class="b">S</span><span class="b"><i class="dot"></i></span><span class="b"><i class="mo"></i></span></div><span class="nme">LEAD1</span><svg class="ic" style="width:18px;height:14px"><use href="#ky"/></svg></div><div class="sl"><i style="width:55%"></i></div></div>
<div class="hr t" style="top:457px;height:44px"><div class="st" style="background:#74f5f5"></div><div class="ln"><span class="n">32</span><div class="bx"><span class="b">M</span><span class="b">S</span><span class="b"><i class="dot"></i></span><span class="b"><i class="mo"></i></span></div><span class="nme">PAD</span><svg class="ic" style="width:18px;height:14px"><use href="#ky"/></svg></div><div class="sl"><i style="width:58%"></i></div></div>
<div class="hr t" style="top:502px;height:44px"><div class="st" style="background:#6ae0c6"></div><div class="ln"><span class="n">33</span><div class="bx"><span class="b">M</span><span class="b">S</span><span class="b"><i class="dot"></i></span><span class="b"><i class="mo"></i></span></div><span class="nme">LEAD2</span><svg class="ic" style="width:18px;height:14px"><use href="#ky"/></svg></div><div class="sl"><i style="width:47%"></i></div></div>
<div class="hr t" style="top:547px;height:44px"><div class="st" style="background:#4da6f0"></div><div class="ln"><span class="n">34</span><div class="bx"><span class="b">M</span><span class="b">S</span><span class="b"><i class="dot"></i></span><span class="b"><i class="mo"></i></span></div><span class="nme">SRX key</span><svg class="ic" style="width:18px;height:14px"><use href="#wv"/></svg></div></div>
<div class="hr" style="top:592px;height:22px"><div class="st" style="background:#b84cc4"></div><div class="ln"><span class="n">35</span><div class="bx f"><span class="b">M</span><span class="b">S</span><span class="b"><i class="dot"></i></span><span class="b"><i class="mo"></i></span></div><span class="nme">Farfisa 3</span><svg class="ic"><use href="#wv"/></svg></div></div>
<div class="hr" style="top:615px;height:22px"><div class="st" style="background:#4da6f0"></div><div class="ln"><span class="n">36</span><div class="bx f"><span class="b">M</span><span class="b">S</span><span class="b"><i class="dot"></i></span><span class="b"><i class="mo"></i></span></div><span class="nme">SRX key 3</span><svg class="ic"><use href="#wv"/></svg></div></div>
<div class="hr" style="top:638px;height:22px"><div class="st" style="background:#b84cc4"></div><div class="ln"><span class="n">37</span><div class="bx f"><span class="b">M</span><span class="b">S</span><span class="b"><i class="dot"></i></span><span class="b"><i class="mo"></i></span></div><span class="nme">lead3 brk</span><svg class="ic"><use href="#wv"/></svg></div></div>
<div class="hr" style="top:661px;height:22px"><div class="st" style="background:#4da6f0"></div><div class="ln"><span class="n">38</span><div class="bx f"><span class="b">M</span><span class="b">S</span><span class="b"><i class="dot"></i></span><span class="b"><i class="mo"></i></span></div><span class="nme">SRX key</span><svg class="ic"><use href="#wv"/></svg></div></div>
<div class="hr t" style="top:684px;height:44px"><div class="st" style="background:#3c8fcc"></div><div class="ln"><span class="n">39</span><div class="bx"><span class="b">M</span><span class="b">S</span><span class="b"><i class="dot"></i></span><span class="b"><i class="mo"></i></span></div><span class="nme">OTHE..YNTH</span><svg class="ic" style="width:18px;height:14px"><use href="#ky"/></svg></div><div class="sl"><i style="width:58%"></i></div></div>
<div class="hr t" style="top:729px;height:44px"><div class="st" style="background:#55bcf5"></div><div class="ln"><span class="n">40</span><div class="bx"><span class="b">M</span><span class="b">S</span><span class="b"><i class="dot"></i></span><span class="b"><i class="mo"></i></span></div><span class="nme">RECO ..OGUE</span><svg class="ic" style="width:18px;height:14px"><use href="#wv"/></svg></div></div>
<div class="hr t" style="top:774px;height:44px"><div class="st" style="background:#1428b8"></div><div class="ln"><span class="n">41</span><div class="bx"><span class="b">M</span><span class="b">S</span><span class="b"><i class="dot"></i></span><span class="b"><i class="mo"></i></span></div><span class="nme">Arp rec</span><svg class="ic" style="width:18px;height:14px"><use href="#wv"/></svg></div></div>
<div class="hr t" style="top:819px;height:28px"><div class="st" style="background:#4535a8"></div><div class="ln"><span class="n">42</span><div class="bx"><span class="b">M</span><span class="b">S</span><span class="b"><i class="dot"></i></span><span class="b"><i class="mo"></i></span></div><span class="nme">Cello rec</span><svg class="ic" style="width:18px;height:14px"><use href="#wv"/></svg></div></div>
<div class="abs" style="left:265px;top:40px;width:2px;height:807px;background:#2c2e33"></div>

<div class="abs" style="left:4px;top:847px;width:1564px;height:19px;background:#2a2d31"></div>
<div class="abs" style="left:4px;top:847px;width:53px;height:19px;background:#b03a35;color:#fff;font-size:12px;text-align:center;line-height:19px">M</div>
<div class="abs" style="left:78px;top:847px;color:#ddd;font-size:12px;line-height:19px">S</div>
<svg class="abs" style="left:131px;top:850px" width="13" height="13"><path d="M3.5 3.5 A5 5 0 1 0 9.5 3.5" stroke="#3a90e0" stroke-width="1.8" fill="none"/><path d="M6.5 1V7" stroke="#3a90e0" stroke-width="1.8"/></svg>
<div class="abs" style="left:193px;top:847px;color:#ccc;font-size:12px;line-height:19px">Tiny</div>
<div class="abs" style="left:244px;top:853px;width:0;height:0;border-left:4.5px solid transparent;border-right:4.5px solid transparent;border-top:8px solid #888"></div>
<svg class="abs" style="left:266px;top:850px" width="10" height="13"><path d="M0 2H10M0 6H10M0 10H10" stroke="#888" stroke-width="2.5"/></svg>
<div class="abs" style="left:283px;top:847px;width:2px;height:21px;background:#1c1e21"></div>
<div class="abs" style="left:292px;top:851px;width:0;height:0;border-top:5px solid transparent;border-bottom:5px solid transparent;border-right:7px solid #888"></div>
<div class="abs" style="left:312px;top:853px;width:518px;height:7px;background:#7d7d7d;border-radius:4px"></div>
<div class="abs" style="left:1411px;top:851px;width:0;height:0;border-top:5px solid transparent;border-bottom:5px solid transparent;border-left:7px solid #888"></div>
<div class="abs" style="left:1434px;top:855px;width:98px;height:3px;background:#888"></div>
<div class="abs" style="left:1440px;top:850px;width:3px;height:12px;background:#888;border-radius:1px"></div>
<div class="abs" style="left:1524px;top:851px;width:8px;height:10px;background:#888;border-radius:4px"></div>
<div class="abs" style="left:1553px;top:851px;width:7px;height:4px;background:#888"></div><div class="abs" style="left:1553px;top:857px;width:7px;height:4px;background:#888"></div>
<div class="abs" style="left:0;top:866px;width:1568px;height:3px;background:#151618"></div>
</div></body></html>
